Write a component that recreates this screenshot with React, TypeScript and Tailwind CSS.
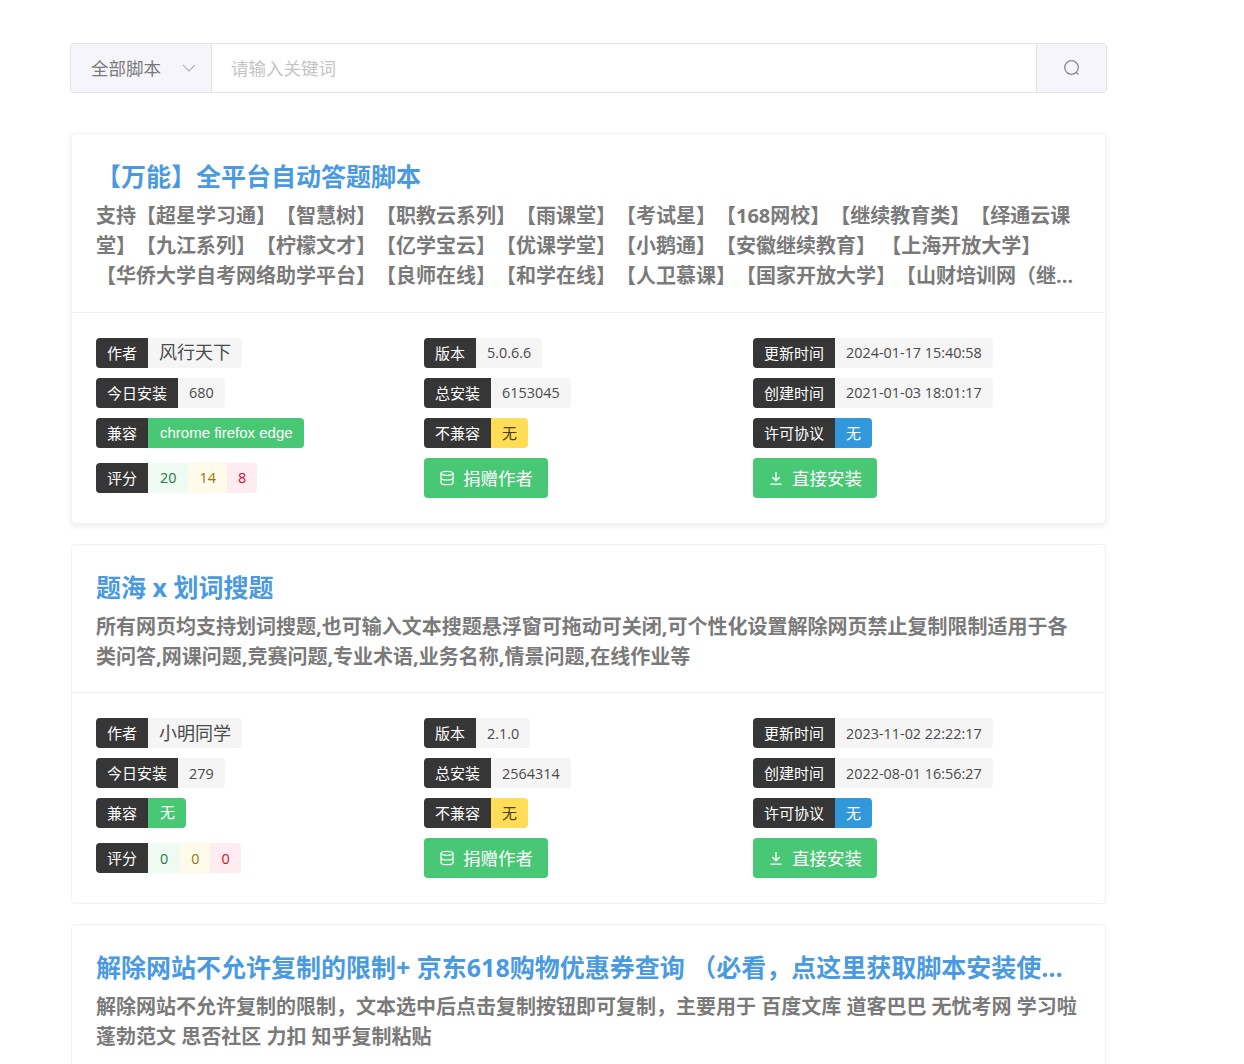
import { Database } from "lucide-react";
import type { ReactNode } from "react";

function Tag({ label, children }: { label: string; children: ReactNode }) {
  return (
    <div className="flex h-[30px] items-center text-[15px]">
      <span className="flex h-full items-center rounded-l-[4px] bg-[#363636] px-[11px] text-white">{label}</span>
      {children}
    </div>
  );
}

function Val({ children, big }: { children: ReactNode; big?: boolean }) {
  return (
    <span className={`flex h-full items-center rounded-r-[4px] bg-[#f5f5f5] px-[11px] text-[#4a4a4a] ${big ? "text-[18px]" : "text-[14.4px]"}`}>
      {children}
    </span>
  );
}

function Btn({ icon, text }: { icon: ReactNode; text: string }) {
  return (
    <div className="flex h-10 w-fit items-center gap-2 rounded-[4px] bg-[#48c774] px-[15px] text-[17.5px] text-white">
      {icon}
      <span>{text}</span>
    </div>
  );
}

const DownloadIcon = (
  <svg width="16" height="16" viewBox="0 0 17 17" fill="none" stroke="currentColor" strokeWidth="1.5">
    <path d="M8.5 2v9M4.5 7.5l4 4 4-4M2.5 15h12" />
  </svg>
);

type Script = {
  title: string;
  desc: string;
  author: string;
  version: string;
  updated: string;
  today: string;
  total: string;
  created: string;
  compat: string;
  good: string;
  ok: string;
  bad: string;
  shadow?: boolean;
};

const scripts: Script[] = [
  {
    title: "【万能】全平台自动答题脚本",
    desc: "支持【超星学习通】【智慧树】【职教云系列】【雨课堂】【考试星】【168网校】【继续教育类】【绎通云课堂】【九江系列】【柠檬文才】【亿学宝云】【优课学堂】【小鹅通】【安徽继续教育】 【上海开放大学】 【华侨大学自考网络助学平台】【良师在线】【和学在线】【人卫慕课】【国家开放大学】【山财培训网（继续教育）】【浙江省高等学校在线开放课程】",
    author: "风行天下",
    version: "5.0.6.6",
    updated: "2024-01-17 15:40:58",
    today: "680",
    total: "6153045",
    created: "2021-01-03 18:01:17",
    compat: "chrome firefox edge",
    good: "20",
    ok: "14",
    bad: "8",
    shadow: true,
  },
  {
    title: "题海 x 划词搜题",
    desc: "所有网页均支持划词搜题,也可输入文本搜题悬浮窗可拖动可关闭,可个性化设置解除网页禁止复制限制适用于各类问答,网课问题,竞赛问题,专业术语,业务名称,情景问题,在线作业等",
    author: "小明同学",
    version: "2.1.0",
    updated: "2023-11-02 22:22:17",
    today: "279",
    total: "2564314",
    created: "2022-08-01 16:56:27",
    compat: "无",
    good: "0",
    ok: "0",
    bad: "0",
  },
];

function Card({ s }: { s: Script }) {
  return (
    <div className={`rounded-[4px] border border-[#f2f2f2] bg-white ${s.shadow ? "shadow-[0_2px_6px_rgba(0,0,0,0.08)]" : ""}`}>
      <div className="border-b border-[#f0f0f0] px-6 pt-6 pb-[20.5px]">
        <h2 className="truncate text-[25px] leading-[36px] font-bold text-[#4a9ae1]">{s.title}</h2>
        <p className="mt-[7px] line-clamp-3 text-[20px] leading-[30px] font-bold text-[#7a7a7a]">{s.desc}</p>
      </div>
      <div className="grid grid-cols-[328px_329px_1fr] gap-y-[10px] px-6 pt-[25px] pb-[25px]">
        <Tag label="作者"><Val big>{s.author}</Val></Tag>
        <Tag label="版本"><Val>{s.version}</Val></Tag>
        <Tag label="更新时间"><Val>{s.updated}</Val></Tag>
        <Tag label="今日安装"><Val>{s.today}</Val></Tag>
        <Tag label="总安装"><Val>{s.total}</Val></Tag>
        <Tag label="创建时间"><Val>{s.created}</Val></Tag>
        <Tag label="兼容">
          <span className="flex h-full items-center rounded-r-[4px] bg-[#48c774] pr-[11px] pl-3 font-['Liberation_Sans','Noto_Sans_CJK_SC',sans-serif] text-white">{s.compat}</span>
        </Tag>
        <Tag label="不兼容">
          <span className="flex h-full items-center rounded-r-[4px] bg-[#ffdd57] px-[11px] text-[#4a3c0a]">无</span>
        </Tag>
        <Tag label="许可协议">
          <span className="flex h-full items-center rounded-r-[4px] bg-[#3298dc] px-[11px] text-white">无</span>
        </Tag>
        <div className="flex h-10 items-center">
          <Tag label="评分">
            <span className="flex h-full items-center bg-[#effaf3] px-3 text-[14.4px] text-[#257942]">{s.good}</span>
            <span className="flex h-full items-center bg-[#fffbeb] px-[11px] text-[14.4px] text-[#947600]">{s.ok}</span>
            <span className="flex h-full items-center rounded-r-[4px] bg-[#feecf0] px-[11px] text-[14.4px] text-[#cc0f35]">{s.bad}</span>
          </Tag>
        </div>
        <Btn icon={<Database size={16} strokeWidth={1.75} />} text="捐赠作者" />
        <Btn icon={DownloadIcon} text="直接安装" />
      </div>
    </div>
  );
}

export default function App() {
  return (
    <div className="h-[1064px] overflow-hidden bg-white font-['Open_Sans','Noto_Sans_CJK_SC',sans-serif] [text-spacing-trim:space-all]">
      <div className="ml-[71px] flex w-[1035px] flex-col pt-[43px]">
        <div className="-mx-px flex h-[50px] rounded-[4px] border border-[#e4e4e8] text-[17.5px]">
          <div className="flex w-[141px] items-center justify-between rounded-l-[4px] border-r border-[#e4e4e8] bg-[#f5f5fb] pr-[15px] pl-5 text-[#7a7a7a]">
            <span>全部脚本</span>
            <svg width="14" height="8" viewBox="0 0 14 8" fill="none" stroke="#b5b5b5" strokeWidth="1.2">
              <path d="M1 1l6 6 6-6" />
            </svg>
          </div>
          <div className="flex flex-1 items-center px-[19px] text-[#c4c4c4]">请输入关键词</div>
          <div className="flex w-[70px] items-center justify-center rounded-r-[4px] border-l border-[#e4e4e8] bg-[#f5f5fb]">
            <svg width="18" height="18" viewBox="0 0 18 18" fill="none" stroke="#8a8a8a" strokeWidth="1.3">
              <circle cx="8.5" cy="8.5" r="6.8" />
              <path d="M13.5 13.5l2 2" />
            </svg>
          </div>
        </div>

        <div className="mt-[40.4px] flex flex-col gap-5">
          {scripts.map((s) => (
            <Card key={s.title} s={s} />
          ))}
          <div className="rounded-[4px] border border-[#f2f2f2] bg-white">
            <div className="px-6 pt-6 pb-[21px]">
              <h2 className="truncate text-[25px] leading-[36px] font-bold text-[#4a9ae1]">
                解除网站不允许复制的限制+ 京东618购物优惠券查询 （必看，点这里获取脚本安装使用教程和更多优惠活动）
              </h2>
              <p className="mt-[7px] line-clamp-3 text-[20px] leading-[30px] font-bold text-[#7a7a7a]">
                解除网站不允许复制的限制，文本选中后点击复制按钮即可复制，主要用于 百度文库 道客巴巴 无忧考网 学习啦 蓬勃范文 思否社区 力扣 知乎复制粘贴
              </p>
            </div>
          </div>
        </div>
      </div>
    </div>
  );
}
